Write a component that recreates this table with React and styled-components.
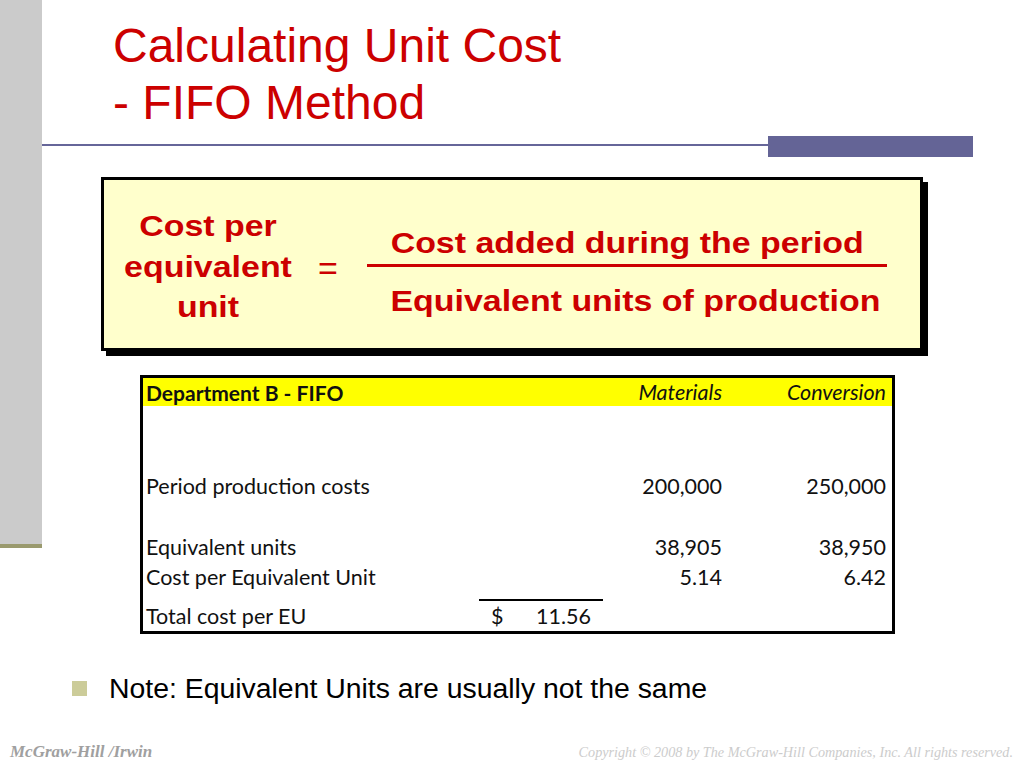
import React from "react";
import styled, { createGlobalStyle } from "styled-components";

const GlobalStyle = createGlobalStyle`
  html, body {
    margin: 0;
    padding: 0;
    background: #ffffff;
  }
  body {
    font-family: "Liberation Sans", Arial, sans-serif;
  }
`;

const rows = [
  { label: "Period production costs", materials: "200,000", conversion: "250,000", gap: 65 },
  { label: "Equivalent units", materials: "38,905", conversion: "38,950", gap: 31 },
  { label: "Cost per Equivalent Unit", materials: "5.14", conversion: "6.42", gap: 0 },
];

const App = () => {
  return (
    <>
      <GlobalStyle />
      <Slide>
        <Sidebar />
        <Main>
          <Title>
            Calculating Unit Cost
            <br />- FIFO Method
          </Title>
          <RuleRow>
            <RuleLine />
            <RuleBlock />
          </RuleRow>

          <FormulaBox>
            <LeftTerm>
              Cost per
              <br />
              equivalent
              <br />
              unit
            </LeftTerm>
            <Equals>=</Equals>
            <Fraction>
              <Numerator>
                <Wide>Cost added during the period</Wide>
              </Numerator>
              <Denominator>
                <Wide>Equivalent units of production</Wide>
              </Denominator>
            </Fraction>
          </FormulaBox>

          <Table>
            <HeaderRow>
              <HeaderTitle>Department B - FIFO</HeaderTitle>
              <HeaderCol>Materials</HeaderCol>
              <HeaderCol>Conversion</HeaderCol>
            </HeaderRow>
            {rows.map((r) => (
              <React.Fragment key={r.label}>
                {r.gap > 0 && <Spacer $h={r.gap} />}
                <Row>
                  <Label>{r.label}</Label>
                  <Cell />
                  <Num>{r.materials}</Num>
                  <Num>{r.conversion}</Num>
                </Row>
              </React.Fragment>
            ))}
            <TotalRow>
              <Label>Total cost per EU</Label>
              <DollarCell>
                <span>$</span>
                <span>11.56</span>
              </DollarCell>
              <Cell />
              <Cell />
            </TotalRow>
          </Table>

          <Note>
            <Bullet />
            Note: Equivalent Units are usually not the same
          </Note>
        </Main>
        <Footer>
          <Publisher>McGraw-Hill /Irwin</Publisher>
          <Copyright>
            Copyright © 2008 by The McGraw-Hill Companies, Inc. All rights reserved.
          </Copyright>
        </Footer>
      </Slide>
    </>
  );
};

export default App;

const Slide = styled.div`
  width: 1024px;
  height: 768px;
  display: grid;
  grid-template-columns: 42px 1fr;
  grid-template-rows: auto 1fr;
  background: #ffffff;
  overflow: hidden;
`;

const Sidebar = styled.div`
  grid-column: 1;
  grid-row: 1;
  align-self: start;
  height: 544px;
  background: #cbcbcb;
  border-bottom: 4px solid #9a9a6e;
`;

const Main = styled.div`
  grid-column: 2;
  grid-row: 1;
  display: flex;
  flex-direction: column;
`;

const Title = styled.h1`
  margin: 17px 0 0 71px;
  font-family: "Liberation Sans", Arial, sans-serif;
  font-weight: 400;
  font-size: 48px;
  line-height: 57px;
  color: #cc0000;
`;

const RuleRow = styled.div`
  display: flex;
  align-items: flex-start;
  margin: 5px 51px 0 0;
  height: 21px;
`;

const RuleLine = styled.div`
  flex: 1;
  height: 2px;
  margin-top: 8px;
  background: #666699;
`;

const RuleBlock = styled.div`
  width: 205px;
  height: 21px;
  background: #646496;
`;

/* the formula on the slide is a horizontally stretched picture of Arial Bold */
const FormulaBox = styled.div`
  box-sizing: border-box;
  width: 822px;
  height: 174px;
  margin: 20px 0 0 59px;
  display: flex;
  align-items: flex-start;
  background: #ffffcc;
  border: 3px solid #000;
  box-shadow: 5px 5px 0 #000;
  color: #cc0000;
  font-family: "Liberation Sans", Arial, sans-serif;
  font-weight: 700;
  font-size: 29px;
`;

const LeftTerm = styled.div`
  width: 208px;
  margin-top: 26px;
  text-align: center;
  line-height: 40.5px;
  transform: scaleX(1.17);
`;

const Equals = styled.div`
  width: 32px;
  margin-top: 68px;
  text-align: center;
  font-weight: 400;
  font-size: 34px;
  line-height: 40px;
`;

const Fraction = styled.div`
  width: 520px;
  margin: 45px 0 0 23px;
  display: flex;
  flex-direction: column;
`;

const Wide = styled.span`
  display: inline-block;
  transform: scaleX(1.17);
`;

const Numerator = styled.div`
  text-align: center;
  line-height: 36px;
  padding-bottom: 3px;
  border-bottom: 3px solid #cc0000;
`;

const Denominator = styled.div`
  text-align: center;
  padding: 14px 0 0 16px;
  line-height: 40px;
`;

const Table = styled.div`
  box-sizing: border-box;
  width: 755px;
  height: 259px;
  margin: 24px 0 0 98px;
  border: 3px solid #000;
  font-family: Lato, "Open Sans", sans-serif;
  font-size: 21.5px;
  color: #111;
`;

const Row = styled.div`
  display: grid;
  grid-template-columns: 336px 124px 125px 1fr;
  height: 30px;
  align-items: center;
`;

const HeaderRow = styled(Row)`
  height: 28px;
  background: #ffff00;
`;

const HeaderTitle = styled.div`
  grid-column: 1 / span 2;
  padding-left: 3px;
  font-size: 21px;
  font-weight: 700;
`;

const HeaderCol = styled.div`
  padding-right: 6px;
  text-align: right;
  font-style: italic;
`;

const Spacer = styled.div`
  height: ${(p) => p.$h}px;
`;

const Label = styled.div`
  padding-left: 3px;
  white-space: nowrap;
`;

const Cell = styled.div``;

const Num = styled.div`
  padding-right: 6px;
  text-align: right;
`;

const TotalRow = styled(Row)`
  height: 39px;
  align-items: end;
  & > div {
    line-height: 30px;
  }
`;

const DollarCell = styled.div`
  display: flex;
  justify-content: space-between;
  padding: 0 12px 0 12px;
  border-top: 2px solid #000;
`;

const Note = styled.div`
  display: flex;
  align-items: center;
  margin: 37px 0 0 30px;
  font-family: "Liberation Sans", Arial, sans-serif;
  font-size: 28.4px;
  line-height: 34px;
  color: #000;
`;

const Bullet = styled.span`
  width: 15px;
  height: 15px;
  margin-right: 22px;
  background: #cccc99;
`;

const Footer = styled.div`
  grid-column: 1 / span 2;
  grid-row: 2;
  display: flex;
  justify-content: space-between;
  align-items: baseline;
  padding: 37px 11px 0 10px;
  font-family: "Liberation Serif", "Times New Roman", serif;
  font-style: italic;
`;

const Publisher = styled.div`
  font-size: 17px;
  font-weight: 700;
  color: #a0a0a0;
`;

const Copyright = styled.div`
  font-size: 14.2px;
  color: #cccccc;
`;
